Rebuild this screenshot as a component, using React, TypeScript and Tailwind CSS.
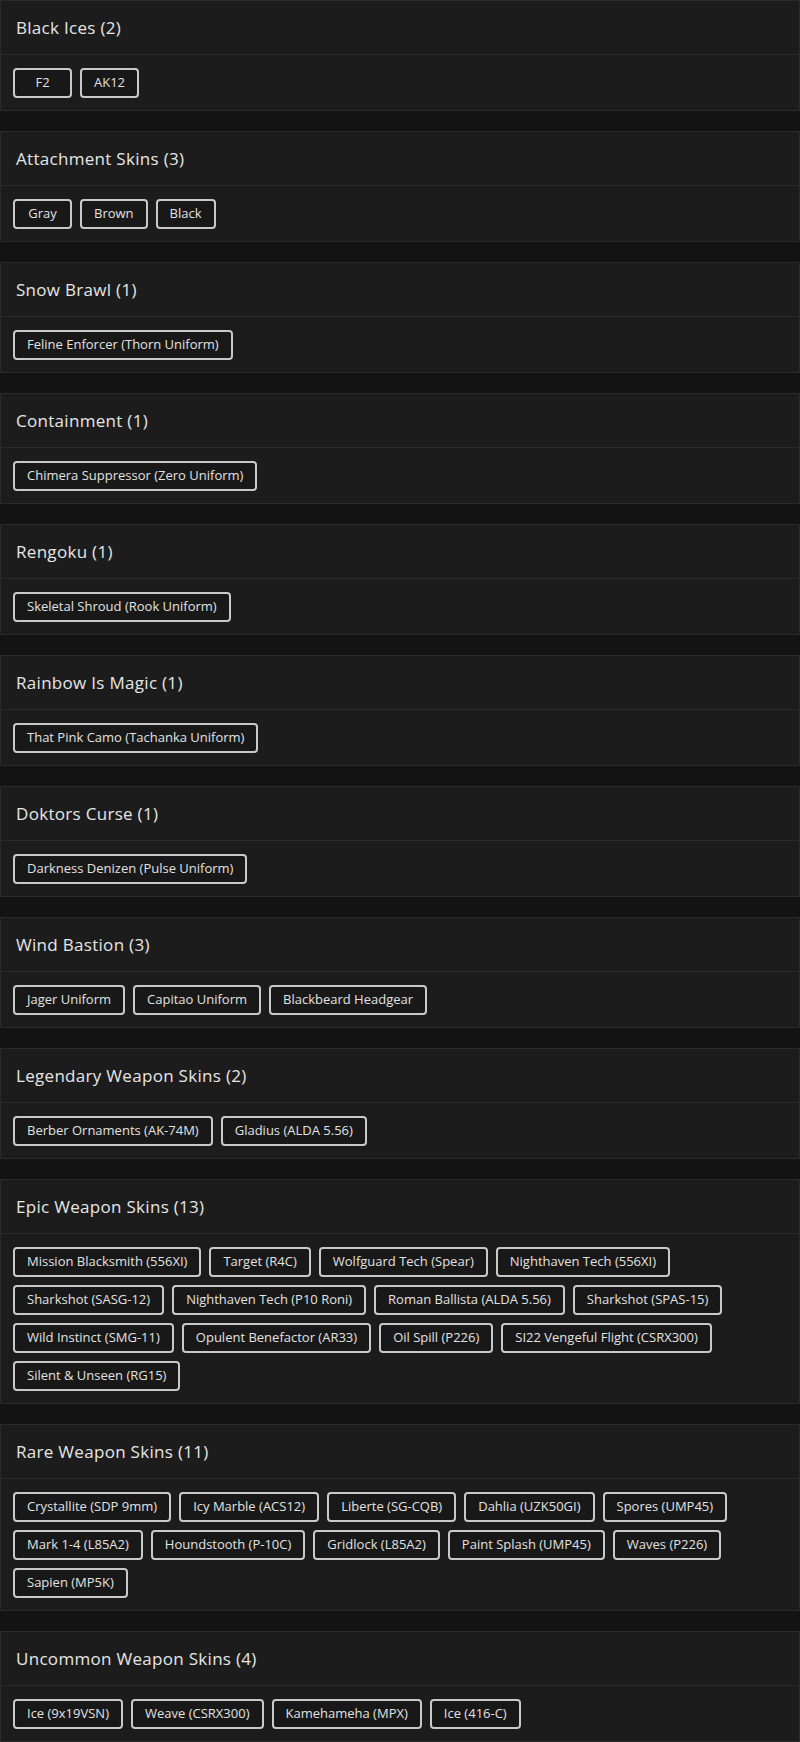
import React from "react";

const groups: { title: string; items: string[] }[] = [
  { title: "Black Ices (2)", items: ["F2", "AK12"] },
  { title: "Attachment Skins (3)", items: ["Gray", "Brown", "Black"] },
  { title: "Snow Brawl (1)", items: ["Feline Enforcer (Thorn Uniform)"] },
  { title: "Containment (1)", items: ["Chimera Suppressor (Zero Uniform)"] },
  { title: "Rengoku (1)", items: ["Skeletal Shroud (Rook Uniform)"] },
  { title: "Rainbow Is Magic (1)", items: ["That Pink Camo (Tachanka Uniform)"] },
  { title: "Doktors Curse (1)", items: ["Darkness Denizen (Pulse Uniform)"] },
  { title: "Wind Bastion (3)", items: ["Jager Uniform", "Capitao Uniform", "Blackbeard Headgear"] },
  { title: "Legendary Weapon Skins (2)", items: ["Berber Ornaments (AK-74M)", "Gladius (ALDA 5.56)"] },
  {
    title: "Epic Weapon Skins (13)",
    items: [
      "Mission Blacksmith (556XI)",
      "Target (R4C)",
      "Wolfguard Tech (Spear)",
      "Nighthaven Tech (556XI)",
      "Sharkshot (SASG-12)",
      "Nighthaven Tech (P10 Roni)",
      "Roman Ballista (ALDA 5.56)",
      "Sharkshot (SPAS-15)",
      "Wild Instinct (SMG-11)",
      "Opulent Benefactor (AR33)",
      "Oil Spill (P226)",
      "SI22 Vengeful Flight (CSRX300)",
      "Silent & Unseen (RG15)",
    ],
  },
  {
    title: "Rare Weapon Skins (11)",
    items: [
      "Crystallite (SDP 9mm)",
      "Icy Marble (ACS12)",
      "Liberte (SG-CQB)",
      "Dahlia (UZK50GI)",
      "Spores (UMP45)",
      "Mark 1-4 (L85A2)",
      "Houndstooth (P-10C)",
      "Gridlock (L85A2)",
      "Paint Splash (UMP45)",
      "Waves (P226)",
      "Sapien (MP5K)",
    ],
  },
  {
    title: "Uncommon Weapon Skins (4)",
    items: ["Ice (9x19VSN)", "Weave (CSRX300)", "Kamehameha (MPX)", "Ice (416-C)"],
  },
];

export default function App() {
  return (
    <div
      className="min-h-[1742px] w-[800px] bg-[#131313] flex flex-col gap-[20px]"
      style={{ fontFamily: '"Open Sans", "Liberation Sans", sans-serif' }}
    >
      {groups.map((g) => (
        <div key={g.title} className="border border-[#2a2a2a] bg-[#1c1c1c]">
          <div className="h-[54px] flex items-center px-[15px] border-b border-[#2a2a2a]">
            <h2 className="text-[17px] text-[#e6e6e6] font-medium tracking-[0.3px]">{g.title}</h2>
          </div>
          <div className="flex flex-wrap gap-[8px] pt-[13px] pb-[12px] px-[12px]">
            {g.items.map((it, i) => (
              <div
                key={i}
                className="h-[30px] min-w-[59px] px-[12px] flex items-center justify-center border-2 border-[#c9c9c9] rounded-[4px] bg-[#181818] text-[13px] text-[#e2e2e2] whitespace-nowrap"
              >
                {it}
              </div>
            ))}
          </div>
        </div>
      ))}
    </div>
  );
}
